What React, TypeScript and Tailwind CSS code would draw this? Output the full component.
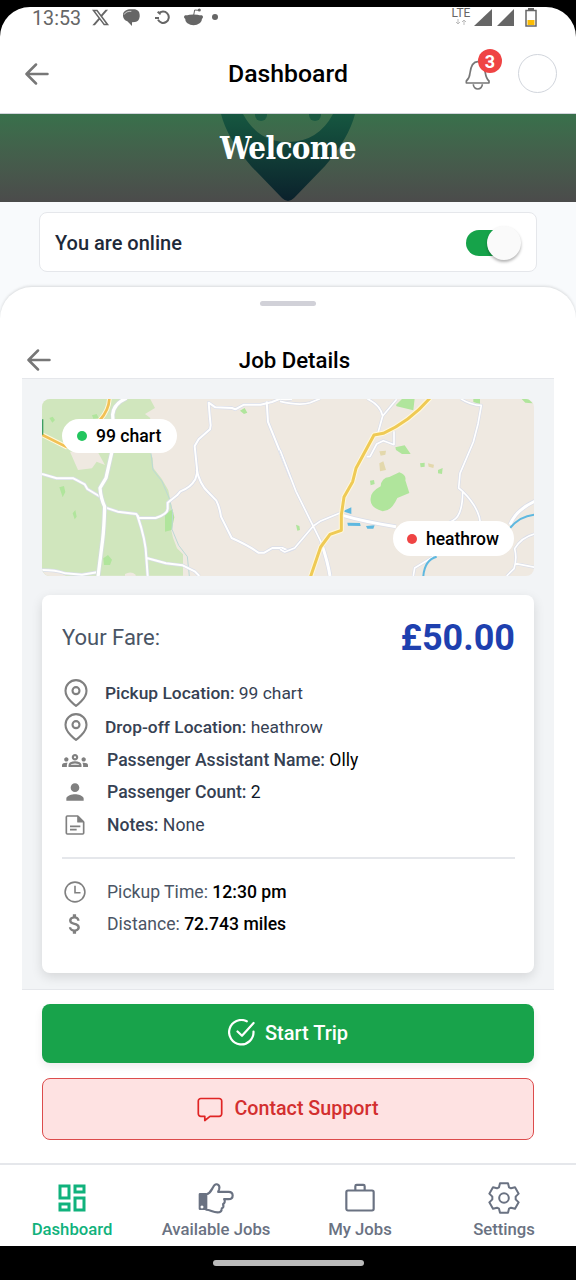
import React, { useState } from 'react';
import { FaXTwitter } from 'react-icons/fa6';
import { FiMapPin } from 'react-icons/fi';
import { MdOutlineGroups, MdPerson, MdAttachMoney, MdOutlineDashboard } from 'react-icons/md';

function BackArrow() {
  return (
    <svg width="24" height="22" viewBox="0 0 24 22" fill="none" stroke="#777" strokeWidth="2.5" strokeLinecap="round" strokeLinejoin="round">
      <path d="M11 1.5 1.5 11l9.500 9.500M2 11h20.500" />
    </svg>
  );
}

function BellIcon() {
  return (
    <svg width="28" height="33" viewBox="0 0 84 99" fill="none" stroke="#777" strokeWidth="5" strokeLinejoin="round">
      <path d="M7 75h68v-6c-7-6-9-12-11-24-3-24-10-34-23-34S21 22 18 45c-1 12-4 18-11 24z" />
      <path d="M28 79a13.500 14 0 0 0 27 0" />
    </svg>
  );
}

function NoteIcon() {
  return (
    <svg width="20" height="20" viewBox="0 0 60 60" fill="none" stroke="#808080" strokeWidth="5" strokeLinejoin="round">
      <path d="M7 3h31l18 18v33q0 3-3 3H7q-3 0-3-3V6q0-3 3-3z" />
      <path d="M39 5v15h15z" fill="#808080" />
      <path d="M15 34h31M15 44h20" strokeWidth="5" />
    </svg>
  );
}

function ClockIcon() {
  return (
    <svg width="22" height="22" viewBox="0 0 22 22" fill="none" stroke="#808080" strokeWidth="1.600">
      <circle cx="11" cy="11" r="9.900" />
      <path d="M11 4.800v7h5.500" />
    </svg>
  );
}

function CheckIcon() {
  return (
    <svg width="27" height="27" viewBox="0 0 27 27" fill="none" stroke="#fff" strokeWidth="2.200" strokeLinecap="round" strokeLinejoin="round">
      <path d="M18.800 2.300A12.200 12.200 0 1 0 25.500 12.500" />
      <path d="M9.500 12.500l4.500 4.300L25.600 4" />
    </svg>
  );
}

function CommentIcon() {
  return (
    <svg width="26" height="25" viewBox="0 0 26 25" fill="none" stroke="#e02424" strokeWidth="1.700" strokeLinejoin="round">
      <path d="M3.800 1.500h18.400a2.500 2.500 0 0 1 2.500 2.500v12.800a2.500 2.500 0 0 1-2.500 2.500H13L7.800 23.500v-4.200h-4a2.500 2.500 0 0 1-2.500-2.500V4a2.500 2.500 0 0 1 2.500-2.500z" />
    </svg>
  );
}

function HandIcon() {
  return (
    <svg width="38" height="33" viewBox="0 0 115 100" fill="none" stroke="currentColor" strokeWidth="6.500" strokeLinejoin="round">
      <path fillRule="evenodd" stroke="none" fill="currentColor" d="M9 36h20v52H9q-4 0-4-4V40q0-4 4-4zm6 38a4.500 4.500 0 1 0 .1 0z" />
      <path d="M28 41c12-4 15-12 20-21 4-9 7-11 12-10 7 2 9 8 7 15-1 3-2 5-3 8h32c16 0 16 22 0 22H82c4 5 2 13-3 15 2 7-1 12-4 13 0 9-5 12-13 12-14 0-22-8-34-8z" />
    </svg>
  );
}

function BriefcaseIcon() {
  return (
    <svg width="30" height="29" viewBox="0 0 90 86" fill="none" stroke="currentColor" strokeWidth="6.500" strokeLinejoin="round">
      <rect x="4" y="22" width="82" height="60" rx="5" />
      <path d="M31 22V9q0-4 4-4h20q4 0 4 4v13" />
    </svg>
  );
}

function GearIcon() {
  return (
    <svg width="32" height="32" viewBox="-48 -48 96 96" fill="none" stroke="currentColor" strokeWidth="6" strokeLinejoin="round">
      <path d="M-12-44H12L15-32 21-29 33-32 44-13 35-4V4L44 13 33 32 21 29 15 32 12 44H-12L-15 32-21 29-33 32-44 13-35 4V-4L-44-13-33-32-21-29-15-32z" />
      <circle r="14.500" />
    </svg>
  );
}

function StatusBar() {
  return (
    <div className="h-[22px] pl-8 pr-[38px] flex items-center justify-between text-[#666]">
      <div className="flex items-center">
        <span className="w-[50px] text-[19.700px] leading-[22px] pt-px">13:53</span>
        <FaXTwitter className="ml-[9px] -mt-[2px] w-[19px] h-[19px]" />
        <svg className="ml-[13px] -mt-px" width="17" height="17" viewBox="0 0 51 51" fill="#666">
          <path d="M0 15C2 5 14 0 26 1h10q13 3 14 16v6q-2 14-14 16l-9 1v11L13 37C3 34-1 26 0 15z" />
          <path d="M3 17C8 8 16 7 25 7" fill="none" stroke="#fff" strokeWidth="2" />
        </svg>
        <svg className="ml-[15px] -mt-[2px]" width="15" height="16" viewBox="0 0 45 48" fill="none" stroke="#666" strokeWidth="6">
          <path d="M11 14A17 17 0 1 1 9 32M0 27h12M8 8l9 8" />
        </svg>
        <svg className="ml-[14px] -mt-[2px]" width="19" height="18" viewBox="0 0 57 54" fill="#666">
          <path d="M4 23q24-7 49 0 4 14-5 22-19 14-39 0Q1 37 4 23z" />
          <circle cx="5" cy="27" r="5" />
          <circle cx="52" cy="27" r="5" />
          <circle cx="46" cy="6" r="4.500" />
          <path d="M29 22l3-16 13 1" fill="none" stroke="#666" strokeWidth="3" />
        </svg>
        <span className="ml-[9px] -mt-[2px] size-[6px] rounded-full bg-[#666]" />
      </div>
      <div className="flex items-center">
        <div className="w-[18px] -mt-[4px] flex flex-col items-center">
          <span className="text-[12px] leading-[12px]">LTE</span>
          <svg width="12" height="6" viewBox="0 0 12 6" fill="none" stroke="#bbb" strokeWidth="1">
            <path d="M3 0v5M1 3l2 2 2-2M9 6V1M7 3l2-2 2 2" />
          </svg>
        </div>
        <svg className="ml-[4px] -mt-[2px]" width="18" height="17" viewBox="0 0 18 17" fill="#666"><path d="M18 0v17H0z" /></svg>
        <svg className="ml-[5px] -mt-[2px]" width="17" height="17" viewBox="0 0 17 17" fill="#666"><path d="M17 0v17H0z" /></svg>
        <svg className="ml-[11px] mr-px -mt-[2px]" width="12" height="19" viewBox="0 0 12 19" fill="none">
          <path d="M3 1h6" stroke="#666" strokeWidth="2" />
          <rect x="1" y="2.500" width="10" height="15.500" stroke="#666" strokeWidth="1.500" />
          <rect x="2.500" y="12" width="7" height="5" fill="#fbbc04" />
        </svg>
      </div>
    </div>
  );
}

function RouteMap() {
  return (
    <svg className="block" width="492" height="177" viewBox="0 0 492 177" fill="none" strokeLinejoin="round">
      <rect width="492" height="177" fill="#efe9e1" />
      {/* west half */}
      <g transform="translate(-12 -9) scale(.33333)">
        <path d="M36 26H360l15 28-30 18 16 12-15 70 22 50 2 30 25 32 20 35 10 50-8 40 12 52 12 32 18 18v64H36z" fill="#d0e6bd" />
        <path d="M120 185l80-5 25 45-25-10-14 20-42 5z" fill="#efe9e1" />
        <path d="M36 544l52 2 20 12H36zM285 552q18-10 32 2v4h-32z" fill="#efe9e1" />
        <path d="M405 375l22-18 6 25-8 38-20 5zM88 292l14-4 4 18-8 16zM220 505l14-10 12 14-6 16-18 0zM128 370l8-10 4 20-6 8zM58 84l10-4 7 10-8 8zM186 76l14-4 6 12-16 2zM630 62l14-8 8 14-10 4z" fill="#b0e59c" />
        <path d="M363 190l6 50 27 34 22 52 10 42-2 50 20 48 26 34 6 58" stroke="#bcd8d6" strokeWidth="3" />
        <g stroke="#d9dde9" strokeWidth="10">
          <path d="M36 252l44 13 50 0 34 18 8 14 40 24 15 32 36 12 56 7 8 12h50q36-12 36-28v-18l28-22 10-12q30-10 45-36l6-22-8-78 12-20 34-30 2-12-3-30-3-38 20 14 50 2 10 4 26-14 50 0 34-8 30-12 30 4" />
          <path d="M500 240q10 44 34 66l25 26q10 20 14 48l32 64q50 22 80 44h18l24-14h30l18 8 20-8" />
          <path d="M710 34l4 62 68 168M322 376q26 76 27 126l4 56M350 504l58 16 50 6 36 18 14 14M36 540q40 0 70 10l50 4 50-8" />
        </g>
        <g stroke="#fff" strokeWidth="6">
          <path d="M36 252l44 13 50 0 34 18 8 14 40 24 15 32 36 12 56 7 8 12h50q36-12 36-28v-18l28-22 10-12q30-10 45-36l6-22-8-78 12-20 34-30 2-12-3-30-3-38 20 14 50 2 10 4 26-14 50 0 34-8 30-12 30 4" />
          <path d="M500 240q10 44 34 66l25 26q10 20 14 48l32 64q50 22 80 44h18l24-14h30l18 8 20-8" />
          <path d="M710 34l4 62 68 168M322 376q26 76 27 126l4 56M350 504l58 16 50 6 36 18 14 14M36 540q40 0 70 10l50 4 50-8" />
        </g>
        <path d="M290 24q-40 18-42 50 4 50-2 110l-18 80-18 30q2 30 14 56-2 66-6 98l-14 112" stroke="#d3ddd9" strokeWidth="15" />
        <path d="M290 24q-40 18-42 50 4 50-2 110l-18 80-18 30q2 30 14 56-2 66-6 98l-14 112" stroke="#fff" strokeWidth="10" />
        <path d="M238 24q0 34-28 66M36 134l76 38" stroke="#fff8dc" strokeWidth="14" />
        <path d="M238 24q0 34-28 66M36 134l76 38" stroke="#f2c155" strokeWidth="8" />
        <path d="M38 88v46" stroke="#3f9e62" strokeWidth="4" />
      </g>
      {/* east half */}
      <g transform="translate(238 -9) scale(.33333)">
        <path d="M348 45l20-20h36l-4 36-50-12zM346 172l28-6 18 26-26 0-18-12zM272 325q0-20 30-36 2-26 26-28l30-14q22 8 18 24l12 38-36 15q-18 40-44 40-40-12-36-39zM270 272l12-2 2 12-12 4zM420 220l14-2 0 12-12 2zM474 240l14-6-2 18-12-2zM48 404l10 4 2 12-8 2zM580 26h20v16l-20-6zM724 26h20l14 14-22-2z" fill="#b0e59c" />
        <path d="M298 184l20-2-2 12-14 3zM298 220l12-6 8 26-18 4zM444 220l18 4-2 10-14-4z" fill="#e3d8ac" />
        <path d="M188 364l26-12v20zM202 398l38 1 2 9-38-1zM258 408l26-2-4 10-18 0z" fill="#5eb8e0" />
        <g stroke="#d9dde9" strokeWidth="9">
          <path d="M0 180l48 124 76 154 28 100M0 478l14 8 30-12 56-66 20-14 62-26M0 34q60 14 90 4l30-12M262 26q40 20 46 52l42-50M308 78l-14 50M342 124v40l-32-12-20 10-20 38-10 0M542 26q30 20 62 20l-10 56-14 54-40 94-4 44 12 10q60 60 52 114M548 304q0 74-30 88l-40 20M764 432q-40 10-60 44 8 30-2 60l-22 22M704 520l60 12M460 500l-56 34-4 24" />
        </g>
        <g stroke="#fff" strokeWidth="5">
          <path d="M0 180l48 124 76 154 28 100M0 478l14 8 30-12 56-66 20-14 62-26M0 34q60 14 90 4l30-12M262 26q40 20 46 52l42-50M308 78l-14 50M342 124v40l-32-12-20 10-20 38-10 0M542 26q30 20 62 20l-10 56-14 54-40 94-4 44 12 10q60 60 52 114M548 304q0 74-30 88l-40 20M764 432q-40 10-60 44 8 30-2 60l-22 22M704 520l60 12M460 500l-56 34-4 24" />
        </g>
        <path d="M188 376q60 18 160 34M124 458q20 60 26 100M690 404q18-44 74-70" stroke="#d9dde9" strokeWidth="13" />
        <path d="M188 376q60 18 160 34M124 458q20 60 26 100M690 404q18-44 74-70" stroke="#fff" strokeWidth="9" />
        <path d="M690 414q30-36 74-40M470 500q-36 10-40 58" stroke="#5eb8e0" strokeWidth="6" />
        <path d="M450 24q-60 70-140 106l-28 5-54 100-10 40-26 46-8 54 0 46-34 12-28 38-30 88" stroke="#fff8dc" strokeWidth="15" />
        <path d="M450 24q-60 70-140 106l-28 5-54 100-10 40-26 46-8 54 0 46-34 12-28 38-30 88" stroke="#efca55" strokeWidth="9" />
      </g>
    </svg>
  );
}

const jobRows = [
  { icon: <FiMapPin size={28} strokeWidth={1.8} />, label: 'Pickup Location:', value: '99 chart', row: 'h-[34px]', box: 'w-7', text: 'ml-[15px] text-[17.4px] text-gray-700' },
  { icon: <FiMapPin size={28} strokeWidth={1.8} />, label: 'Drop-off Location:', value: 'heathrow', row: 'h-[34px]', box: 'w-7', text: 'ml-[15px] text-[17.4px] text-gray-700' },
  { icon: <MdOutlineGroups size={27} />, label: 'Passenger Assistant Name:', value: 'Olly', row: 'h-8', box: 'w-[26px]', text: 'ml-[19px] text-[17.6px] text-black' },
  { icon: <MdPerson size={26} />, label: 'Passenger Count:', value: '2', row: 'h-8', box: 'w-[26px]', text: 'ml-[19px] text-[17.6px] text-gray-900' },
  { icon: <NoteIcon />, label: 'Notes:', value: 'None', row: 'h-[33px]', box: 'w-[26px]', text: 'ml-[19px] text-[17.6px] text-gray-700' },
];

const tabs = [
  { id: 'dashboard', label: 'Dashboard', icon: <MdOutlineDashboard size={36} /> },
  { id: 'available', label: 'Available Jobs', icon: <HandIcon /> },
  { id: 'jobs', label: 'My Jobs', icon: <BriefcaseIcon /> },
  { id: 'settings', label: 'Settings', icon: <GearIcon /> },
];

export default function App() {
  const [activeTab, setActiveTab] = useState('dashboard');
  const [online, setOnline] = useState(true);

  return (
    <div className="w-[576px] h-[1280px] pt-[7px] bg-black flex flex-col overflow-hidden font-['Roboto',sans-serif]">
      {/* Header */}
      <div className="h-[107px] shrink-0 rounded-t-[30px] bg-white border-b border-gray-300">
        <StatusBar />
        <div className="mt-[8px] h-[73px] pl-[25px] pr-[19px] grid grid-cols-[1fr_auto_1fr] items-center">
          <BackArrow />
          <h1 className="-ml-[6px] text-[24.8px] font-medium text-black">Dashboard</h1>
          <div className="flex items-center justify-end">
            <button className="relative mr-[26px] top-px">
              <BellIcon />
              <span className="absolute -top-[9px] left-[14px] size-[24px] rounded-full bg-[#ef4444] text-white text-[18px] leading-[25px] font-bold text-center">3</span>
            </button>
            <div className="size-[39px] rounded-full border border-gray-300" />
          </div>
        </div>
      </div>

      {/* Welcome banner */}
      <div className="relative h-[88px] shrink-0 bg-gradient-to-b from-[#38704b] to-[#4b4b4b]">
        <svg className="block" width="576" height="88" viewBox="0 0 576 88">
          <defs>
            <linearGradient id="pin" x1="0" y1="0" x2="0" y2="1">
              <stop offset="0" stopColor="#165740" />
              <stop offset="1" stopColor="#0b212c" />
            </linearGradient>
          </defs>
          <path fill="url(#pin)" fillRule="evenodd" d="M221 0H355Q349 24 325 52L294 84Q288 90 282 84L251 52Q227 24 221 0zM243 0Q258 28 288 28T333 0z" />
          <circle cx="261" cy="1" r="6" fill="#1b5a42" />
          <circle cx="315" cy="1" r="6" fill="#1b5a42" />
        </svg>
        <h2 className="absolute inset-x-0 top-[13px] text-center text-[31px] leading-[42px] font-bold text-white tracking-[-0.6px] font-['DejaVu_Serif_Condensed','DejaVu_Serif',serif] [font-stretch:condensed]">Welcome</h2>
      </div>

      {/* Online status */}
      <div className="h-[85px] shrink-0 px-[39px] pt-[10px] bg-[#f8fafc]">
        <div className="h-[60px] pl-[15px] pr-[14px] flex items-center justify-between bg-white border border-gray-200 rounded-lg">
          <span className="pt-px text-[20px] font-medium text-gray-800">You are online</span>
          <button onClick={() => setOnline(!online)} className="w-[56px] h-9 mt-px flex items-center">
            <span className={online ? 'w-[42px] h-[26px] rounded-full bg-[#16a34a]' : 'w-[42px] h-[26px] rounded-full bg-gray-300'} />
            <span className="-ml-[21px] size-[34px] shrink-0 rounded-full bg-[#fafafa] shadow-[0_2px_3px_rgba(0,0,0,0.3)]" />
          </button>
        </div>
      </div>

      {/* Job sheet */}
      <div className="shrink-0 bg-[#f8fafc]">
        <div className="h-[876px] px-[22px] pt-[14px] bg-white rounded-t-[32px] shadow-[0_-1px_3px_rgba(0,0,0,0.13)]">
          <div className="mx-auto w-14 h-[5px] rounded-full bg-[#d1d1d8]" />
          <div className="mt-[36px] h-[36px] pl-[5px] pr-[16px] flex items-center">
            <BackArrow />
            <h3 className="flex-1 text-center text-[22.2px] leading-[34px] font-medium text-black">Job Details</h3>
          </div>

          <div className="w-[532px] h-[612px] px-5 pt-[20px] bg-[#f2f4f6] border-y border-gray-200">
            <div className="relative h-[177px] rounded-lg overflow-hidden">
              <RouteMap />
              <div className="absolute left-5 top-5 w-[115px] h-[34px] pl-[15px] flex items-center rounded-full bg-white">
                <span className="size-[10px] rounded-full bg-[#22c55e]" />
                <span className="ml-[9px] pt-px text-[17.6px] font-medium text-black whitespace-nowrap">99 chart</span>
              </div>
              <div className="absolute right-5 bottom-[20px] w-[121px] h-[35px] pl-[14px] flex items-center rounded-full bg-white">
                <span className="size-[10px] rounded-full bg-[#ef4444]" />
                <span className="ml-[9px] pt-px text-[17.5px] font-medium text-black whitespace-nowrap">heathrow</span>
              </div>
            </div>

            {/* Fare card */}
            <div className="mt-[19px] h-[378px] pl-[20px] pr-[19px] pt-[17px] bg-white rounded-lg shadow-[0_4px_12px_rgba(0,0,0,0.12)]">
              <div className="h-[50px] flex items-center justify-between">
                <span className="text-[22px] text-gray-600">Your Fare:</span>
                <span className="pt-[2px] text-[36px] font-bold text-[#1e40af]">£50.00</span>
              </div>
              <div className="mt-[14px]">
                {jobRows.map((r) => (
                  <div key={r.label} className={`flex items-center ${r.row}`}>
                    <div className={`flex justify-center text-[#808080] ${r.box}`}>{r.icon}</div>
                    <p className={`whitespace-nowrap pt-px ${r.text}`}>
                      <span className="font-medium text-gray-700">{r.label}</span> {r.value}
                    </p>
                  </div>
                ))}
              </div>
              <div className="mt-[16px] border-t-2 border-gray-200" />
              <div className="mt-[17px] text-[17.6px] text-gray-600">
                <div className="h-8 flex items-center">
                  <div className="w-[26px] flex justify-center"><ClockIcon /></div>
                  <p className="ml-[19px]">Pickup Time: <span className="font-medium text-black">12:30 pm</span></p>
                </div>
                <div className="h-8 flex items-center">
                  <div className="w-[26px] flex justify-center text-[#808080]"><MdAttachMoney size={26} /></div>
                  <p className="ml-[19px]">Distance: <span className="font-medium text-black">72.743 miles</span></p>
                </div>
              </div>
            </div>
          </div>

          {/* Actions */}
          <div className="pt-[14px] px-5 flex flex-col gap-[15px]">
            <button className="h-[59px] pb-[2px] flex items-center justify-center gap-[10px] rounded-lg bg-[#18a34b] text-white text-[20px] font-medium shadow-[0_4px_8px_rgba(0,0,0,0.08)]">
              <CheckIcon />
              Start Trip
            </button>
            <button className="h-[62px] flex items-center justify-center gap-[11px] rounded-lg border border-[#dc4c4c] bg-[#fee2e2] text-[#d32f2f] text-[19.700px] font-medium">
              <CommentIcon />
              Contact Support
            </button>
          </div>
        </div>
      </div>

      {/* Bottom tabs */}
      <div className="h-[83px] shrink-0 grid grid-cols-4 bg-white border-t-2 border-gray-200">
        {tabs.map((tab) => (
          <button
            key={tab.id}
            onClick={() => setActiveTab(tab.id)}
            className={`pt-[14px] flex flex-col items-center justify-start ${activeTab === tab.id ? 'text-[#10b27c]' : 'text-gray-500'}`}
          >
            <span className="h-[37px] flex items-center">{tab.icon}</span>
            <span className="mt-[4px] text-[16.700px] leading-[20px] font-medium">{tab.label}</span>
          </button>
        ))}
      </div>

      <div className="h-[34px] shrink-0 flex items-center justify-center">
        <div className="w-[151px] h-[6px] rounded-full bg-[#bbb]" />
      </div>
    </div>
  );
}
